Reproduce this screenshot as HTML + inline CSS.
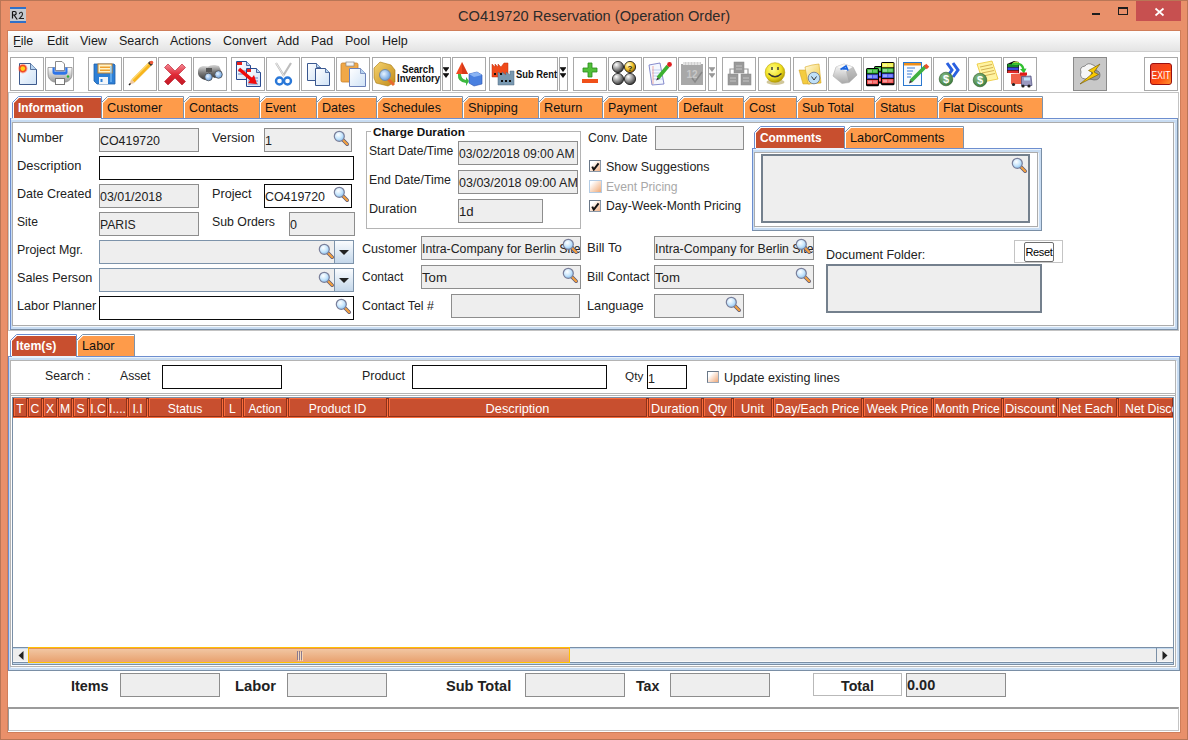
<!DOCTYPE html><html><head><meta charset="utf-8"><style>
html,body{margin:0;padding:0;}
body{width:1188px;height:740px;position:relative;overflow:hidden;background:#e9906a;font-family:"Liberation Sans",sans-serif;}
body div{position:absolute;box-sizing:border-box;}
.t{white-space:pre;}
</style></head><body>
<div style="left:0px;top:0px;width:1188px;height:740px;border:1px solid #b97656;"></div>
<div style="left:10px;top:7px;width:16px;height:16px;background:#c6cacf;border-top:2px solid #2f70c8;border-bottom:2px solid #2f70c8;"></div>
<svg style="position:absolute;left:10px;top:7px" width="16" height="16" viewBox="0 0 16 16"><path d="M2.5 4.5 V11.5 M2.5 4.5 H4.5 Q6.2 4.5 6.2 6.3 Q6.2 8 4.5 8 H2.5 M4 8 L7.2 12.5" stroke="#111" stroke-width="1.2" fill="none"/><path d="M9.3 7 Q9.8 5 11.5 5.3 Q13.2 6 12 8.6 L9.5 11.5 H14" stroke="#222" stroke-width="1.1" fill="none"/></svg>
<div class="t" style="left:458px;top:6px;font-size:15.5px;line-height:20px;color:#2b2b2b;font-weight:400;transform:scaleX(0.943);transform-origin:0 0;">CO419720 Reservation (Operation Order)</div>
<div style="left:1092px;top:13px;width:8px;height:2px;background:#1e1e1e;"></div>
<div style="left:1118px;top:7px;width:10px;height:8px;border:1px solid #1e1e1e;border-top-width:2px;"></div>
<div style="left:1136px;top:1px;width:45px;height:20px;background:#c75050;"></div>
<svg style="position:absolute;left:1154px;top:7px" width="11" height="10" viewBox="0 0 11 10"><path d="M1.5 1.5 L9.5 8.5 M9.5 1.5 L1.5 8.5" stroke="#fff" stroke-width="1.7"/></svg>
<div style="left:7px;top:30px;width:1174px;height:703px;border:1px solid #d07e5a;"></div>
<div style="left:8px;top:31px;width:1172px;height:701px;background:#fff;"></div>
<div style="left:8px;top:31px;width:1172px;height:20px;background:linear-gradient(#ffffff,#e4e4e4);"></div>
<div style="left:8px;top:51px;width:1172px;height:1px;background:#cdcdcd;"></div>
<div class="t" style="left:13px;top:31px;font-size:12.5px;line-height:20px;color:#1a1a1a;font-weight:400;">File</div>
<div class="t" style="left:47px;top:31px;font-size:12.5px;line-height:20px;color:#1a1a1a;font-weight:400;">Edit</div>
<div class="t" style="left:80px;top:31px;font-size:12.5px;line-height:20px;color:#1a1a1a;font-weight:400;">View</div>
<div class="t" style="left:119px;top:31px;font-size:12.5px;line-height:20px;color:#1a1a1a;font-weight:400;">Search</div>
<div class="t" style="left:170px;top:31px;font-size:12.5px;line-height:20px;color:#1a1a1a;font-weight:400;">Actions</div>
<div class="t" style="left:223px;top:31px;font-size:12.5px;line-height:20px;color:#1a1a1a;font-weight:400;">Convert</div>
<div class="t" style="left:277px;top:31px;font-size:12.5px;line-height:20px;color:#1a1a1a;font-weight:400;">Add</div>
<div class="t" style="left:311px;top:31px;font-size:12.5px;line-height:20px;color:#1a1a1a;font-weight:400;">Pad</div>
<div class="t" style="left:345px;top:31px;font-size:12.5px;line-height:20px;color:#1a1a1a;font-weight:400;">Pool</div>
<div class="t" style="left:382px;top:31px;font-size:12.5px;line-height:20px;color:#1a1a1a;font-weight:400;">Help</div>
<div style="left:14px;top:46px;width:7px;height:1px;background:#1a1a1a;"></div>
<div style="left:10px;top:57px;width:34px;height:34px;border:1px solid #a9a9a9;background:#fff;"></div>
<div style="left:45px;top:57px;width:29px;height:34px;border:1px solid #a9a9a9;background:#fff;"></div>
<div style="left:88px;top:57px;width:34px;height:34px;border:1px solid #a9a9a9;background:#fff;"></div>
<div style="left:123px;top:57px;width:34px;height:34px;border:1px solid #a9a9a9;background:#fff;"></div>
<div style="left:158px;top:57px;width:34px;height:34px;border:1px solid #a9a9a9;background:#fff;"></div>
<div style="left:193px;top:57px;width:34px;height:34px;border:1px solid #a9a9a9;background:#fff;"></div>
<div style="left:231px;top:57px;width:34px;height:34px;border:1px solid #a9a9a9;background:#fff;"></div>
<div style="left:266px;top:57px;width:34px;height:34px;border:1px solid #a9a9a9;background:#fff;"></div>
<div style="left:301px;top:57px;width:34px;height:34px;border:1px solid #a9a9a9;background:#fff;"></div>
<div style="left:336px;top:57px;width:34px;height:34px;border:1px solid #a9a9a9;background:#fff;"></div>
<div style="left:372px;top:57px;width:69px;height:34px;border:1px solid #a9a9a9;background:#fff;"></div>
<div style="left:442px;top:57px;width:9px;height:34px;border:1px solid #a9a9a9;background:#fff;"></div>
<div style="left:452px;top:57px;width:34px;height:34px;border:1px solid #a9a9a9;background:#fff;"></div>
<div style="left:489px;top:57px;width:69px;height:34px;border:1px solid #a9a9a9;background:#fff;"></div>
<div style="left:559px;top:57px;width:9px;height:34px;border:1px solid #a9a9a9;background:#fff;"></div>
<div style="left:573px;top:57px;width:34px;height:34px;border:1px solid #a9a9a9;background:#fff;"></div>
<div style="left:608px;top:57px;width:34px;height:34px;border:1px solid #a9a9a9;background:#fff;"></div>
<div style="left:643px;top:57px;width:34px;height:34px;border:1px solid #a9a9a9;background:#fff;"></div>
<div style="left:678px;top:57px;width:28px;height:34px;border:1px solid #a9a9a9;background:#fff;"></div>
<div style="left:708px;top:57px;width:9px;height:34px;border:1px solid #a9a9a9;background:#fff;"></div>
<div style="left:722px;top:57px;width:34px;height:34px;border:1px solid #a9a9a9;background:#fff;"></div>
<div style="left:758px;top:57px;width:33px;height:34px;border:1px solid #a9a9a9;background:#fff;"></div>
<div style="left:793px;top:57px;width:34px;height:34px;border:1px solid #a9a9a9;background:#fff;"></div>
<div style="left:828px;top:57px;width:34px;height:34px;border:1px solid #a9a9a9;background:#fff;"></div>
<div style="left:863px;top:57px;width:34px;height:34px;border:1px solid #a9a9a9;background:#fff;"></div>
<div style="left:898px;top:57px;width:34px;height:34px;border:1px solid #a9a9a9;background:#fff;"></div>
<div style="left:933px;top:57px;width:34px;height:34px;border:1px solid #a9a9a9;background:#fff;"></div>
<div style="left:968px;top:57px;width:34px;height:34px;border:1px solid #a9a9a9;background:#fff;"></div>
<div style="left:1003px;top:57px;width:34px;height:34px;border:1px solid #a9a9a9;background:#fff;"></div>
<div style="left:1073px;top:57px;width:34px;height:34px;border:1px solid #8a8a8a;background:#c8c8c8;"></div>
<div style="left:1144px;top:57px;width:34px;height:34px;border:1px solid #a9a9a9;background:#fff;"></div>
<svg style="position:absolute;left:0;top:0" width="1188" height="100" viewBox="0 0 1188 100"><defs>
<linearGradient id="pg" x1="0" y1="0" x2="1" y2="1"><stop offset="0" stop-color="#ffffff"/><stop offset="1" stop-color="#cfe2f6"/></linearGradient>
<radialGradient id="sun" cx="0.5" cy="0.5" r="0.5"><stop offset="0" stop-color="#fff37a"/><stop offset="0.45" stop-color="#ffb020"/><stop offset="1" stop-color="#ff3020" stop-opacity="0.2"/></radialGradient>
<linearGradient id="xr" x1="0" y1="0" x2="0" y2="1"><stop offset="0" stop-color="#f48a96"/><stop offset="0.5" stop-color="#e02a36"/><stop offset="1" stop-color="#c01824"/></linearGradient>
<radialGradient id="ball" cx="0.35" cy="0.3" r="0.75"><stop offset="0" stop-color="#ffffff"/><stop offset="0.5" stop-color="#9a9a9a"/><stop offset="1" stop-color="#303030"/></radialGradient>
<radialGradient id="yball" cx="0.35" cy="0.3" r="0.75"><stop offset="0" stop-color="#ffffe0"/><stop offset="0.5" stop-color="#f5c830"/><stop offset="1" stop-color="#906000"/></radialGradient>
<radialGradient id="smile" cx="0.4" cy="0.35" r="0.7"><stop offset="0" stop-color="#ffff90"/><stop offset="0.6" stop-color="#f0e020"/><stop offset="1" stop-color="#a89000"/></radialGradient>
<radialGradient id="lens" cx="0.4" cy="0.4" r="0.6"><stop offset="0" stop-color="#e8f4ff"/><stop offset="1" stop-color="#6aa0e0"/></radialGradient>
<radialGradient id="coin" cx="0.4" cy="0.35" r="0.7"><stop offset="0" stop-color="#8cc08c"/><stop offset="1" stop-color="#3a7a3a"/></radialGradient>
<linearGradient id="exitg" x1="0" y1="0" x2="1" y2="1"><stop offset="0" stop-color="#e8402a"/><stop offset="0.6" stop-color="#ff4a10"/><stop offset="1" stop-color="#ff9a30"/></linearGradient>
<linearGradient id="keyg" x1="0" y1="0" x2="0" y2="1"><stop offset="0" stop-color="#ffffff"/><stop offset="1" stop-color="#a8a8a8"/></linearGradient>
<linearGradient id="fold" x1="0" y1="0" x2="1" y2="1"><stop offset="0" stop-color="#fffbe0"/><stop offset="1" stop-color="#f2c430"/></linearGradient>
<linearGradient id="boxg" x1="0" y1="0" x2="1" y2="1"><stop offset="0" stop-color="#f6d470"/><stop offset="1" stop-color="#c08a18"/></linearGradient>
<linearGradient id="prn" x1="0" y1="0" x2="0" y2="1"><stop offset="0" stop-color="#ffffff"/><stop offset="1" stop-color="#9a9a9a"/></linearGradient>
</defs><path d="M19.5 63.5 L30.5 63.5 L36.5 69.5 L36.5 84.5 L19.5 84.5 Z" fill="url(#pg)" stroke="#3d5a8c"/><path d="M30.5 63.5 L30.5 69.5 L36.5 69.5" fill="#b8d4f0" stroke="#3d5a8c" stroke-width="0.8"/><circle cx="22.8" cy="68.6" r="4.8" fill="#ff4020" opacity="0.35"/><circle cx="22.8" cy="68.6" r="3.8" fill="#f24a22"/><circle cx="22.8" cy="68.6" r="2.3" fill="#ffd21a"/><path d="M48 67.5 L72 67.5 L72 74 Q72 80 66 82 L54 82 Q48 80 48 74 Z" fill="url(#prn)" stroke="#8a8a8a" stroke-width="0.8"/><path d="M52.5 67.5 H67.5 V72 Q67.5 74.8 64.5 74.8 H55.5 Q52.5 74.8 52.5 72 Z" fill="#2f74e8"/><rect x="54.5" y="67.5" width="11" height="4.5" fill="#8ab8f8"/><path d="M55.5 61.5 L62 61.5 L64.5 64 L64.5 70.5 L55.5 70.5 Z" fill="#fff" stroke="#8a8a8a"/><rect x="55.5" y="70" width="9" height="1.5" fill="#8a8a9a"/><circle cx="68" cy="76.5" r="1.2" fill="#2cb030"/><rect x="55.5" y="78.5" width="9" height="6" fill="#fff" stroke="#777"/><path d="M94 64 L114 64 L115 65 L115 84 L97 84 L94 81 Z" fill="#2d7fd6" stroke="#1f5fa8" stroke-width="0.8"/><rect x="98" y="64" width="14" height="9" fill="#fff4c8" stroke="#c8842c"/><rect x="100" y="66.5" width="10" height="1.5" fill="#f0a030"/><rect x="100" y="69.5" width="10" height="1.5" fill="#f0a030"/><rect x="99" y="77" width="9" height="7" fill="#f2f6fa"/><rect x="100.5" y="79" width="2" height="3" fill="#2d7fd6"/><rect x="110" y="66" width="2" height="16" fill="#7cc0f8" opacity="0.6"/><path d="M131 83 L150 64" stroke="#e0e0e0" stroke-width="5" opacity="0.35"/><path d="M133 81 L150 64" stroke="#f7b51e" stroke-width="4"/><path d="M132 80 L149 63" stroke="#ffd86a" stroke-width="1.2"/><path d="M149 62 L152 65" stroke="#333" stroke-width="3"/><circle cx="151.5" cy="62.5" r="1.8" fill="#f05a3a"/><path d="M131.2 79.5 L134.5 82.8 L129 85 Z" fill="#f0c8a0"/><path d="M129 85 L130.5 83.5" stroke="#222" stroke-width="1.5"/><path d="M168 64 L175 71 L182 64 L185.5 67.5 L178.5 74.5 L185.5 81.5 L182 85 L175 78 L168 85 L164.5 81.5 L171.5 74.5 L164.5 67.5 Z" fill="url(#xr)" stroke="#c02a3a" stroke-width="0.7"/><defs><linearGradient id="bino" x1="0" y1="0" x2="0" y2="1"><stop offset="0" stop-color="#d8d8d8"/><stop offset="0.5" stop-color="#7a7a7a"/><stop offset="1" stop-color="#3a3a3a"/></linearGradient></defs><path d="M198 71 Q198 67 203 66 L209 66.5 L212 75 L205 80 Q199 78 198 74 Z" fill="url(#bino)"/><path d="M208 67 Q210 64.5 215 65 L219 66 L222 73 L215 78 Q210 76 208 72 Z" fill="url(#bino)"/><rect x="206" y="68" width="6" height="4" fill="#555"/><circle cx="208.5" cy="77" r="3.8" fill="url(#lens)" stroke="#4a4a4a" stroke-width="0.8"/><circle cx="218.5" cy="74.5" r="3.8" fill="url(#lens)" stroke="#4a4a4a" stroke-width="0.8"/><path d="M236.5 61.5 L246.5 61.5 L250.5 65.5 L250.5 79.5 L236.5 79.5 Z" fill="url(#pg)" stroke="#2a4a90"/><path d="M246.5 61.5 L246.5 65.5 L250.5 65.5" fill="#b8d4f0" stroke="#2a4a90" stroke-width="0.8"/><rect x="237" y="62" width="5" height="3" fill="#e8201a"/><path d="M238 71 H247 M238 74 H247" stroke="#6680c0"/><path d="M246.5 68.5 L256.5 68.5 L260.5 72.5 L260.5 86.5 L246.5 86.5 Z" fill="url(#pg)" stroke="#2a4a90"/><path d="M256.5 68.5 L256.5 72.5 L260.5 72.5" fill="#b8d4f0" stroke="#2a4a90" stroke-width="0.8"/><rect x="247" y="69" width="4" height="3" fill="#e8201a"/><path d="M248 78 H258 M248 81 H258 M248 84 H258" stroke="#6680c0"/><path d="M239 69 L252 80" stroke="#f00a0a" stroke-width="3.5"/><path d="M248 83 L257 84 L254 75 Z" fill="#f00a0a"/><path d="M276 63 L284 76 M291 63 L283 76" stroke="#bdbdbd" stroke-width="2.2"/><path d="M276 63 L284 76" stroke="#f4f4f4" stroke-width="0.8"/><circle cx="279.5" cy="81" r="3.5" fill="none" stroke="#2a78d8" stroke-width="2.4"/><circle cx="287.5" cy="81" r="3.5" fill="none" stroke="#2a78d8" stroke-width="2.4"/><path d="M307.5 63.5 L316.5 63.5 L320.5 67.5 L320.5 80.5 L307.5 80.5 Z" fill="url(#pg)" stroke="#3a5890"/><path d="M316.5 63.5 L316.5 67.5 L320.5 67.5" fill="#b8d4f0" stroke="#3a5890" stroke-width="0.8"/><path d="M315.5 68.5 L325.5 68.5 L329.5 72.5 L329.5 85.5 L315.5 85.5 Z" fill="url(#pg)" stroke="#3a5890"/><path d="M325.5 68.5 L325.5 72.5 L329.5 72.5" fill="#b8d4f0" stroke="#3a5890" stroke-width="0.8"/><rect x="341" y="63" width="17" height="19" rx="1.5" fill="#f0a848" stroke="#c8802a" stroke-width="0.8"/><rect x="346" y="62" width="8" height="4" fill="#f4f4f4" stroke="#888" stroke-width="0.7"/><path d="M349.5 68.5 L360.5 68.5 L365.5 73.5 L365.5 86.5 L349.5 86.5 Z" fill="url(#pg)" stroke="#6a80b8"/><path d="M360.5 68.5 L360.5 73.5 L365.5 73.5" fill="#b8d4f0" stroke="#6a80b8" stroke-width="0.8"/><path d="M374 68 L380 62 L391 65 L395 70 L395 82 L388 86 L376 83 L374 78 Z" fill="url(#boxg)" stroke="#a87810" stroke-width="0.6"/><path d="M388 79 L394 85" stroke="#e86a30" stroke-width="3"/><circle cx="385" cy="75" r="5.5" fill="url(#lens)" stroke="#7a8a9a" stroke-width="1"/><text x="418" y="73" text-anchor="middle" font-family="Liberation Sans" font-weight="700" font-size="10" fill="#111" textLength="32" lengthAdjust="spacingAndGlyphs">Search</text><text x="418.5" y="82" text-anchor="middle" font-family="Liberation Sans" font-weight="700" font-size="10" fill="#111" textLength="43" lengthAdjust="spacingAndGlyphs">Inventory</text><path d="M443 68 H449 L446 72 Z M443 74 H449 L446 78 Z" fill="#111"/><path d="M443 67.5 H449 M443 73.5 H449" stroke="#111" stroke-width="0.8"/><path d="M462 62 L468 74 L456 74 Z" fill="#f04a20"/><path d="M462 62 L468 74 L462 74 Z" fill="#c02a10" opacity="0.5"/><path d="M469 74 L477 72 L482 75 L482 84 L474 86 L469 83 Z" fill="#4a80e0" stroke="#2a50b0" stroke-width="0.6"/><path d="M469 74 L477 72 L482 75 L474 77 Z" fill="#8ab4f4"/><path d="M458 74 Q457 82 466 83 L466 86 L469 81 L466 77 L466 80 Q461 79 461 74 Z" fill="#3cb840"/><path d="M492 64 L495 67 L495 64 L498 67 L498 64 L501 67 L504 63 L508 63 L508 77 L492 77 Z" fill="#f04a1a" stroke="#c03010" stroke-width="0.5"/><path d="M498 72 L502 75 L502 72 L506 75 L506 72 L510 75 L510 71 L514 71 L514 85 L498 85 Z" fill="#7898b0" stroke="#506a80" stroke-width="0.5"/><rect x="494" y="73" width="2" height="2" fill="#111"/><rect x="500" y="73" width="2" height="2" fill="#111"/><rect x="501" y="80" width="2" height="2" fill="#111"/><rect x="505" y="80" width="2" height="2" fill="#111"/><rect x="509" y="80" width="2" height="2" fill="#111"/><text x="536.5" y="77.5" text-anchor="middle" font-family="Liberation Sans" font-weight="700" font-size="10" fill="#111" textLength="41" lengthAdjust="spacingAndGlyphs">Sub Rent</text><path d="M560 68 H566 L563 72 Z M560 74 H566 L563 78 Z" fill="#111"/><path d="M560 67.5 H566 M560 73.5 H566" stroke="#111" stroke-width="0.8"/><path d="M588 63 H592 V68 H597 V72 H592 V77 H588 V72 H583 V68 H588 Z" fill="#52c03a" stroke="#2a8a1a" stroke-width="0.8"/><rect x="582" y="79" width="16" height="4" fill="#f0501a"/><circle cx="618" cy="67" r="5.6" fill="url(#ball)" stroke="#111" stroke-width="0.8"/><circle cx="630" cy="67" r="5.6" fill="url(#yball)" stroke="#111" stroke-width="0.8"/><circle cx="618" cy="79" r="5.6" fill="url(#ball)" stroke="#111" stroke-width="0.8"/><circle cx="630" cy="79" r="5.6" fill="url(#ball)" stroke="#111" stroke-width="0.8"/><text x="630" y="71" text-anchor="middle" font-family="Liberation Sans" font-weight="700" font-size="8" fill="#222">?</text><path d="M649 65 L660 63 L664 84 L652 85 Z" fill="#f4f8ff" stroke="#6a70c0" stroke-width="0.8"/><path d="M652 70 H661 M652 73 H662 M653 76 H662 M653 79 H663" stroke="#9ab0e0" stroke-width="0.6"/><path d="M653 66 V84" stroke="#f07a6a" stroke-width="0.6"/><path d="M658 78 L668 66" stroke="#3cb030" stroke-width="3.6"/><circle cx="669.5" cy="64.5" r="2.4" fill="#e02020"/><path d="M656 80.5 L657.5 77.5 L659.5 79 Z" fill="#333"/><rect x="681" y="64" width="22" height="21" fill="#a8a8a8"/><rect x="683" y="62" width="18" height="3" fill="#d0d0d0"/><path d="M684 62 V65 M687 62 V65 M690 62 V65 M693 62 V65 M696 62 V65 M699 62 V65" stroke="#f0f0f0" stroke-width="1.2"/><text x="692" y="78" text-anchor="middle" font-family="Liberation Sans" font-weight="700" font-size="10" fill="#c8c8c8">12</text><path d="M692 78 L695 82 L702 72" stroke="#888" stroke-width="1.5" fill="none"/><path d="M709 68 H715 L712 72 Z M709 74 H715 L712 78 Z" fill="#999"/><path d="M709 67.5 H715 M709 73.5 H715" stroke="#999" stroke-width="0.8"/><path d="M730 75 V69 H748 V75 M739 69 V73" stroke="#999" stroke-width="1.2" fill="none"/><rect x="734" y="62" width="10" height="11" fill="#999" stroke="#888" stroke-width="0.5"/><path d="M736 66 H742 M736 69 H742" stroke="#cfcfcf" stroke-width="0.8"/><rect x="728" y="74" width="10" height="11" fill="#999" stroke="#888" stroke-width="0.5"/><path d="M730 78 H736 M730 81 H736" stroke="#cfcfcf" stroke-width="0.8"/><rect x="741" y="74" width="10" height="11" fill="#999" stroke="#888" stroke-width="0.5"/><path d="M743 78 H749 M743 81 H749" stroke="#cfcfcf" stroke-width="0.8"/><ellipse cx="775.5" cy="82" rx="9" ry="3" fill="#8a7000" opacity="0.4"/><circle cx="775" cy="72.5" r="9.8" fill="url(#smile)" stroke="#b8a000" stroke-width="0.6"/><path d="M772 67 V70 M778 67 V70" stroke="#333" stroke-width="1.4"/><path d="M768.5 73.5 Q775 80 781.5 73.5" stroke="#333" stroke-width="1.4" fill="none"/><path d="M799 70 L806 70 L810 84 L803 84 Z" fill="#f4cc40" stroke="#c89820" stroke-width="0.5"/><path d="M805 67 L812 65 L819 64 L821 83 L808 84 Z" fill="url(#fold)" stroke="#d8a820" stroke-width="0.6"/><circle cx="814" cy="78" r="5.8" fill="#bfe0f8" stroke="#708098" stroke-width="0.9"/><path d="M811.5 76.5 L814 80 L816.5 76.5" stroke="#333" stroke-width="1" fill="none"/><path d="M836 67 L844 64 L853 67 L857 75 L849 82.5 L842 83.5 L833 76 Z" fill="url(#keyg)" stroke="#b0b0b0" stroke-width="0.6"/><path d="M836 67 L844 64 L853 67 L846 71.5 Z" fill="#f8f8f8" stroke="#d8d8d8" stroke-width="0.5"/><path d="M846 71.5 L853 67 L857 75 L849 82.5 Z" fill="#9a9a9a" opacity="0.5"/><path d="M840.5 69.5 L846 66 L848 70.5 M842.5 68.8 L847.2 68.8" stroke="#1a64e0" stroke-width="1.8" fill="none"/><rect x="874" y="66" width="14" height="17.6" rx="1.5" fill="#000"/><rect x="875" y="67.0" width="12" height="4.2" fill="#28b028"/><rect x="876" y="67.8" width="4.5" height="2.6" fill="#fff" opacity="0.45"/><rect x="881.5" y="67.8" width="4.5" height="2.6" fill="#fff" opacity="0.3"/><rect x="875" y="72.2" width="12" height="4.2" fill="#3a4af0"/><rect x="876" y="73.0" width="4.5" height="2.6" fill="#fff" opacity="0.45"/><rect x="881.5" y="73.0" width="4.5" height="2.6" fill="#fff" opacity="0.3"/><rect x="875" y="77.4" width="12" height="4.2" fill="#f03a3a"/><rect x="876" y="78.2" width="4.5" height="2.6" fill="#fff" opacity="0.45"/><rect x="881.5" y="78.2" width="4.5" height="2.6" fill="#fff" opacity="0.3"/><rect x="866" y="68" width="13" height="18.200000000000003" rx="1.5" fill="#000"/><rect x="867" y="69.0" width="11" height="4.4" fill="#28b028"/><rect x="868" y="69.8" width="4.0" height="2.8000000000000003" fill="#fff" opacity="0.45"/><rect x="873.0" y="69.8" width="4.0" height="2.8000000000000003" fill="#fff" opacity="0.3"/><rect x="867" y="74.4" width="11" height="4.4" fill="#4a5af8"/><rect x="868" y="75.2" width="4.0" height="2.8000000000000003" fill="#fff" opacity="0.45"/><rect x="873.0" y="75.2" width="4.0" height="2.8000000000000003" fill="#fff" opacity="0.3"/><rect x="867" y="79.8" width="11" height="4.4" fill="#f04a4a"/><rect x="868" y="80.6" width="4.0" height="2.8000000000000003" fill="#fff" opacity="0.45"/><rect x="873.0" y="80.6" width="4.0" height="2.8000000000000003" fill="#fff" opacity="0.3"/><rect x="881" y="62" width="13.5" height="23.2" rx="1.5" fill="#000"/><rect x="882" y="63.0" width="11.5" height="4.3" fill="#f0f040"/><rect x="883" y="63.8" width="4.25" height="2.6999999999999997" fill="#fff" opacity="0.45"/><rect x="888.25" y="63.8" width="4.25" height="2.6999999999999997" fill="#fff" opacity="0.3"/><rect x="882" y="68.3" width="11.5" height="4.3" fill="#40c040"/><rect x="883" y="69.1" width="4.25" height="2.6999999999999997" fill="#fff" opacity="0.45"/><rect x="888.25" y="69.1" width="4.25" height="2.6999999999999997" fill="#fff" opacity="0.3"/><rect x="882" y="73.6" width="11.5" height="4.3" fill="#4a5af8"/><rect x="883" y="74.39999999999999" width="4.25" height="2.6999999999999997" fill="#fff" opacity="0.45"/><rect x="888.25" y="74.39999999999999" width="4.25" height="2.6999999999999997" fill="#fff" opacity="0.3"/><rect x="882" y="78.9" width="11.5" height="4.3" fill="#f04a4a"/><rect x="883" y="79.7" width="4.25" height="2.6999999999999997" fill="#fff" opacity="0.45"/><rect x="888.25" y="79.7" width="4.25" height="2.6999999999999997" fill="#fff" opacity="0.3"/><rect x="903.5" y="62.5" width="18" height="23" fill="#f8fbff" stroke="#2a78d0"/><rect x="904" y="63" width="17" height="2.5" fill="#f0901a"/><path d="M907 68 H915 M907 71 H913 M907 74 H912 M907 77 H911" stroke="#2a70d0" stroke-width="0.9"/><path d="M911 81 L926 66" stroke="#40b040" stroke-width="3.8"/><path d="M925 65 L928 68" stroke="#e8502a" stroke-width="3.5"/><path d="M909 83.5 L910 80 L912.5 82 Z" fill="#333"/><path d="M947 63 L952 70 L947 77 M953 63 L958 70 L953 77" stroke="#2a60e0" stroke-width="3" fill="none"/><circle cx="946" cy="79" r="6.8" fill="url(#coin)" stroke="#2a5a2a" stroke-width="0.6"/><text x="946" y="83" text-anchor="middle" font-family="Liberation Sans" font-weight="700" font-size="11" fill="#fff">$</text><path d="M977 64 L992 61 L998 79 L983 82 Z" fill="#fff3a0" stroke="#e8c020" stroke-width="0.7"/><path d="M980 67 L992 64.5 M981 70 L993 67.5 M982 73 L994 70.5 M983 76 L995 73.5" stroke="#c8a040" stroke-width="0.8"/><circle cx="980" cy="80" r="6.8" fill="url(#coin)" stroke="#2a5a2a" stroke-width="0.6"/><text x="980" y="84" text-anchor="middle" font-family="Liberation Sans" font-weight="700" font-size="11" fill="#fff">$</text><path d="M1007 64 L1014 61 L1019 62 L1019 73 L1007 73 Z" fill="#111"/><rect x="1007.5" y="64" width="11" height="3" fill="#1a8a2a"/><rect x="1007.5" y="67.5" width="11" height="2.5" fill="#3a4ae0"/><rect x="1007.5" y="70.5" width="11" height="2.5" fill="#e02a2a"/><ellipse cx="1016" cy="63" rx="3" ry="1.6" fill="#e8e050"/><path d="M1012 65 Q1021 63 1022 69 L1020 69 L1024 73.5 L1026.5 68.5 L1024.5 68.8 Q1023 61 1012 63 Z" fill="#30c030"/><path d="M1011 74 L1026 73 L1026 84 L1011 84 Z" fill="#f06048"/><rect x="1020" y="72.5" width="7" height="3" fill="#e01a1a"/><path d="M1021.5 76.5 L1031 76 L1032 85.5 L1021.5 85.5 Z" fill="#9a9ac0" stroke="#4a4a7a" stroke-width="0.7"/><rect x="1024" y="77.5" width="6" height="3" fill="#bfe0f8"/><circle cx="1013.5" cy="84.5" r="1.6" fill="#222"/><circle cx="1023" cy="86" r="1.6" fill="#222"/><circle cx="1029" cy="86" r="1.6" fill="#222"/><path d="M1081 72 Q1079 67 1085 66 Q1088 62 1093 65 Q1097 66 1096 71 Q1097 78 1090 79 L1085 79 Q1079 78 1081 72 Z" fill="#f6f6f6" stroke="#666" stroke-width="0.7"/><path d="M1092 71 Q1100 69 1100 75 Q1100 80 1094 80 L1090 79 Z" fill="#9a9a9a" stroke="#555" stroke-width="0.6"/><path d="M1100 64 L1088.5 70.5 L1093 73 L1080 84 L1098.5 74.5 L1094 72 Z" fill="#f8c800" stroke="#6a5000" stroke-width="0.6"/><rect x="1150.5" y="63.5" width="21" height="21" rx="2.5" fill="url(#exitg)" stroke="#9a1010"/><text x="1161" y="79" text-anchor="middle" font-family="Liberation Sans" font-size="10" fill="#fff" textLength="19" lengthAdjust="spacingAndGlyphs">EXIT</text></svg>
<div style="left:8px;top:92px;width:1171px;height:239px;border:1px solid #c3c3c3;"></div>
<div style="left:10px;top:118px;width:1168px;height:212px;background:#c8dcf2;border-left:1px solid #6d8ecf;border-top:1px solid #6d8ecf;border-right:1px solid #7a8fa6;border-bottom:1px solid #7a8fa6;"></div>
<div style="left:11px;top:119px;width:1166px;height:1px;background:#eaf2fb;"></div>
<div style="left:12px;top:122px;width:1162px;height:204px;background:#fff;border:1px solid #acacac;box-shadow:1px 1px 0 #f4f8fc;"></div>
<svg style="position:absolute;left:12px;top:96px" width="90" height="22" viewBox="0 0 90 22"><path d="M0.5 22 L0.5 6.5 L6.5 0.5 L89.5 0.5 L89.5 22" fill="#fff" stroke="#6d8ecf" stroke-width="1"/><path d="M2 22 L2 7 L7 2 L89 2 L89 22 Z" fill="#c84f2f"/></svg>
<div class="t" style="left:18px;top:98px;font-size:11.93px;line-height:20px;color:#fff;font-weight:700;">Information</div>
<svg style="position:absolute;left:101px;top:96px" width="83" height="22" viewBox="0 0 83 22"><path d="M0.5 22 L0.5 6.5 L6.5 0.5 L82.5 0.5 L82.5 22" fill="#fff" stroke="#7d92aa" stroke-width="1"/><path d="M2 22 L2 7 L7 2 L82 2 L82 22 Z" fill="#fe9b4a"/></svg>
<div class="t" style="left:107px;top:98px;font-size:12.78px;line-height:20px;color:#111;font-weight:400;">Customer</div>
<svg style="position:absolute;left:183px;top:96px" width="77" height="22" viewBox="0 0 77 22"><path d="M0.5 22 L0.5 6.5 L6.5 0.5 L76.5 0.5 L76.5 22" fill="#fff" stroke="#7d92aa" stroke-width="1"/><path d="M2 22 L2 7 L7 2 L76 2 L76 22 Z" fill="#fe9b4a"/></svg>
<div class="t" style="left:189px;top:98px;font-size:12.47px;line-height:20px;color:#111;font-weight:400;">Contacts</div>
<svg style="position:absolute;left:259px;top:96px" width="58" height="22" viewBox="0 0 58 22"><path d="M0.5 22 L0.5 6.5 L6.5 0.5 L57.5 0.5 L57.5 22" fill="#fff" stroke="#7d92aa" stroke-width="1"/><path d="M2 22 L2 7 L7 2 L57 2 L57 22 Z" fill="#fe9b4a"/></svg>
<div class="t" style="left:265px;top:98px;font-size:12.04px;line-height:20px;color:#111;font-weight:400;">Event</div>
<svg style="position:absolute;left:316px;top:96px" width="61" height="22" viewBox="0 0 61 22"><path d="M0.5 22 L0.5 6.5 L6.5 0.5 L60.5 0.5 L60.5 22" fill="#fff" stroke="#7d92aa" stroke-width="1"/><path d="M2 22 L2 7 L7 2 L60 2 L60 22 Z" fill="#fe9b4a"/></svg>
<div class="t" style="left:322px;top:98px;font-size:12.6px;line-height:20px;color:#111;font-weight:400;">Dates</div>
<svg style="position:absolute;left:376px;top:96px" width="87" height="22" viewBox="0 0 87 22"><path d="M0.5 22 L0.5 6.5 L6.5 0.5 L86.5 0.5 L86.5 22" fill="#fff" stroke="#7d92aa" stroke-width="1"/><path d="M2 22 L2 7 L7 2 L86 2 L86 22 Z" fill="#fe9b4a"/></svg>
<div class="t" style="left:382px;top:98px;font-size:12.63px;line-height:20px;color:#111;font-weight:400;">Schedules</div>
<svg style="position:absolute;left:462px;top:96px" width="77" height="22" viewBox="0 0 77 22"><path d="M0.5 22 L0.5 6.5 L6.5 0.5 L76.5 0.5 L76.5 22" fill="#fff" stroke="#7d92aa" stroke-width="1"/><path d="M2 22 L2 7 L7 2 L76 2 L76 22 Z" fill="#fe9b4a"/></svg>
<div class="t" style="left:468px;top:98px;font-size:12.82px;line-height:20px;color:#111;font-weight:400;">Shipping</div>
<svg style="position:absolute;left:538px;top:96px" width="65" height="22" viewBox="0 0 65 22"><path d="M0.5 22 L0.5 6.5 L6.5 0.5 L64.5 0.5 L64.5 22" fill="#fff" stroke="#7d92aa" stroke-width="1"/><path d="M2 22 L2 7 L7 2 L64 2 L64 22 Z" fill="#fe9b4a"/></svg>
<div class="t" style="left:544px;top:98px;font-size:12.77px;line-height:20px;color:#111;font-weight:400;">Return</div>
<svg style="position:absolute;left:602px;top:96px" width="76" height="22" viewBox="0 0 76 22"><path d="M0.5 22 L0.5 6.5 L6.5 0.5 L75.5 0.5 L75.5 22" fill="#fff" stroke="#7d92aa" stroke-width="1"/><path d="M2 22 L2 7 L7 2 L75 2 L75 22 Z" fill="#fe9b4a"/></svg>
<div class="t" style="left:608px;top:98px;font-size:12.39px;line-height:20px;color:#111;font-weight:400;">Payment</div>
<svg style="position:absolute;left:677px;top:96px" width="67" height="22" viewBox="0 0 67 22"><path d="M0.5 22 L0.5 6.5 L6.5 0.5 L66.5 0.5 L66.5 22" fill="#fff" stroke="#7d92aa" stroke-width="1"/><path d="M2 22 L2 7 L7 2 L66 2 L66 22 Z" fill="#fe9b4a"/></svg>
<div class="t" style="left:683px;top:98px;font-size:12.66px;line-height:20px;color:#111;font-weight:400;">Default</div>
<svg style="position:absolute;left:743px;top:96px" width="54" height="22" viewBox="0 0 54 22"><path d="M0.5 22 L0.5 6.5 L6.5 0.5 L53.5 0.5 L53.5 22" fill="#fff" stroke="#7d92aa" stroke-width="1"/><path d="M2 22 L2 7 L7 2 L53 2 L53 22 Z" fill="#fe9b4a"/></svg>
<div class="t" style="left:749px;top:98px;font-size:12.8px;line-height:20px;color:#111;font-weight:400;">Cost</div>
<svg style="position:absolute;left:796px;top:96px" width="79" height="22" viewBox="0 0 79 22"><path d="M0.5 22 L0.5 6.5 L6.5 0.5 L78.5 0.5 L78.5 22" fill="#fff" stroke="#7d92aa" stroke-width="1"/><path d="M2 22 L2 7 L7 2 L78 2 L78 22 Z" fill="#fe9b4a"/></svg>
<div class="t" style="left:802px;top:98px;font-size:12.49px;line-height:20px;color:#111;font-weight:400;">Sub Total</div>
<svg style="position:absolute;left:874px;top:96px" width="64" height="22" viewBox="0 0 64 22"><path d="M0.5 22 L0.5 6.5 L6.5 0.5 L63.5 0.5 L63.5 22" fill="#fff" stroke="#7d92aa" stroke-width="1"/><path d="M2 22 L2 7 L7 2 L63 2 L63 22 Z" fill="#fe9b4a"/></svg>
<div class="t" style="left:880px;top:98px;font-size:12.44px;line-height:20px;color:#111;font-weight:400;">Status</div>
<svg style="position:absolute;left:937px;top:96px" width="106" height="22" viewBox="0 0 106 22"><path d="M0.5 22 L0.5 6.5 L6.5 0.5 L105.5 0.5 L105.5 22" fill="#fff" stroke="#7d92aa" stroke-width="1"/><path d="M2 22 L2 7 L7 2 L105 2 L105 22 Z" fill="#fe9b4a"/></svg>
<div class="t" style="left:943px;top:98px;font-size:12.6px;line-height:20px;color:#111;font-weight:400;">Flat Discounts</div>
<div style="left:13px;top:118px;width:88px;height:1px;background:#eaf2fb;"></div>
<div style="left:11px;top:118px;width:2px;height:1px;background:#c8dcf2;"></div>
<div class="t" style="left:17px;top:128px;font-size:12.99px;line-height:20px;color:#222;font-weight:400;">Number</div>
<div style="left:99px;top:128px;width:100px;height:24px;overflow:hidden;border:1px solid #8d8d8d;background:#eeeeee;"><div class="t" style="left:0px;top:2px;font-size:12.42px;line-height:20px;color:#222;font-weight:400">CO419720</div></div>
<div class="t" style="left:17px;top:156px;font-size:12.89px;line-height:20px;color:#222;font-weight:400;">Description</div>
<div style="left:99px;top:156px;width:255px;height:24px;overflow:hidden;border:1px solid #0a0a0a;background:#fff;"></div>
<div class="t" style="left:17px;top:184px;font-size:12.53px;line-height:20px;color:#222;font-weight:400;">Date Created</div>
<div style="left:99px;top:184px;width:100px;height:24px;overflow:hidden;border:1px solid #8d8d8d;background:#eeeeee;"><div class="t" style="left:0px;top:2px;font-size:12.41px;line-height:20px;color:#222;font-weight:400">03/01/2018</div></div>
<div class="t" style="left:17px;top:212px;font-size:12.12px;line-height:20px;color:#222;font-weight:400;">Site</div>
<div style="left:99px;top:212px;width:100px;height:24px;overflow:hidden;border:1px solid #8d8d8d;background:#eeeeee;"><div class="t" style="left:0px;top:2px;font-size:12.21px;line-height:20px;color:#222;font-weight:400">PARIS</div></div>
<div class="t" style="left:212px;top:128px;font-size:12.77px;line-height:20px;color:#222;font-weight:400;">Version</div>
<div style="left:264px;top:128px;width:88px;height:24px;overflow:hidden;border:1px solid #8d8d8d;background:#eeeeee;"><div class="t" style="left:0px;top:2px;font-size:12.5px;line-height:20px;color:#222;font-weight:400">1</div></div>
<svg style="position:absolute;left:333px;top:130px" width="17" height="17" viewBox="0 0 17 17"><defs><radialGradient id="g333_130" cx="0.4" cy="0.35" r="0.7"><stop offset="0" stop-color="#ffffff"/><stop offset="0.55" stop-color="#c8e6fc"/><stop offset="1" stop-color="#86bff0"/></radialGradient></defs><path d="M9.8 9.8 L14.2 14.2" stroke="#5a5a7a" stroke-width="3.6" stroke-linecap="round"/><path d="M9.8 9.8 L14.2 14.2" stroke="#f2a040" stroke-width="2.2" stroke-linecap="round"/><circle cx="6.3" cy="6.3" r="5" fill="url(#g333_130)" stroke="#7a7f9a" stroke-width="1.2"/></svg>
<div class="t" style="left:212px;top:184px;font-size:12.7px;line-height:20px;color:#222;font-weight:400;">Project</div>
<div style="left:264px;top:184px;width:88px;height:24px;overflow:hidden;border:1px solid #0a0a0a;background:#fff;"><div class="t" style="left:0px;top:2px;font-size:12.42px;line-height:20px;color:#222;font-weight:400">CO419720</div></div>
<svg style="position:absolute;left:333px;top:186px" width="17" height="17" viewBox="0 0 17 17"><defs><radialGradient id="g333_186" cx="0.4" cy="0.35" r="0.7"><stop offset="0" stop-color="#ffffff"/><stop offset="0.55" stop-color="#c8e6fc"/><stop offset="1" stop-color="#86bff0"/></radialGradient></defs><path d="M9.8 9.8 L14.2 14.2" stroke="#5a5a7a" stroke-width="3.6" stroke-linecap="round"/><path d="M9.8 9.8 L14.2 14.2" stroke="#f2a040" stroke-width="2.2" stroke-linecap="round"/><circle cx="6.3" cy="6.3" r="5" fill="url(#g333_186)" stroke="#7a7f9a" stroke-width="1.2"/></svg>
<div class="t" style="left:212px;top:212px;font-size:12.32px;line-height:20px;color:#222;font-weight:400;">Sub Orders</div>
<div style="left:289px;top:212px;width:66px;height:24px;overflow:hidden;border:1px solid #8d8d8d;background:#eeeeee;"><div class="t" style="left:0px;top:2px;font-size:12.5px;line-height:20px;color:#222;font-weight:400">0</div></div>
<div class="t" style="left:17px;top:240px;font-size:12.39px;line-height:20px;color:#222;font-weight:400;">Project Mgr.</div>
<div style="left:99px;top:240px;width:255px;height:24px;overflow:hidden;border:1px solid #7d93aa;background:#eeeeee;"></div>
<div style="left:334px;top:241px;width:19px;height:22px;background:linear-gradient(#fafcfe,#c4d7ea);border-left:1px solid #7d93aa;"></div>
<svg style="position:absolute;left:339px;top:250px" width="10" height="5" viewBox="0 0 10 5"><path d="M0 0 L10 0 L5 5 Z" fill="#222"/></svg>
<svg style="position:absolute;left:318px;top:243px" width="17" height="17" viewBox="0 0 17 17"><defs><radialGradient id="g318_243" cx="0.4" cy="0.35" r="0.7"><stop offset="0" stop-color="#ffffff"/><stop offset="0.55" stop-color="#c8e6fc"/><stop offset="1" stop-color="#86bff0"/></radialGradient></defs><path d="M9.8 9.8 L14.2 14.2" stroke="#5a5a7a" stroke-width="3.6" stroke-linecap="round"/><path d="M9.8 9.8 L14.2 14.2" stroke="#f2a040" stroke-width="2.2" stroke-linecap="round"/><circle cx="6.3" cy="6.3" r="5" fill="url(#g318_243)" stroke="#7a7f9a" stroke-width="1.2"/></svg>
<div class="t" style="left:17px;top:268px;font-size:12.67px;line-height:20px;color:#222;font-weight:400;">Sales Person</div>
<div style="left:99px;top:268px;width:255px;height:24px;overflow:hidden;border:1px solid #7d93aa;background:#eeeeee;"></div>
<div style="left:334px;top:269px;width:19px;height:22px;background:linear-gradient(#fafcfe,#c4d7ea);border-left:1px solid #7d93aa;"></div>
<svg style="position:absolute;left:339px;top:278px" width="10" height="5" viewBox="0 0 10 5"><path d="M0 0 L10 0 L5 5 Z" fill="#222"/></svg>
<svg style="position:absolute;left:318px;top:271px" width="17" height="17" viewBox="0 0 17 17"><defs><radialGradient id="g318_271" cx="0.4" cy="0.35" r="0.7"><stop offset="0" stop-color="#ffffff"/><stop offset="0.55" stop-color="#c8e6fc"/><stop offset="1" stop-color="#86bff0"/></radialGradient></defs><path d="M9.8 9.8 L14.2 14.2" stroke="#5a5a7a" stroke-width="3.6" stroke-linecap="round"/><path d="M9.8 9.8 L14.2 14.2" stroke="#f2a040" stroke-width="2.2" stroke-linecap="round"/><circle cx="6.3" cy="6.3" r="5" fill="url(#g318_271)" stroke="#7a7f9a" stroke-width="1.2"/></svg>
<div class="t" style="left:17px;top:296px;font-size:12.62px;line-height:20px;color:#222;font-weight:400;">Labor Planner</div>
<div style="left:99px;top:296px;width:255px;height:24px;overflow:hidden;border:1px solid #0a0a0a;background:#fff;"></div>
<svg style="position:absolute;left:335px;top:298px" width="17" height="17" viewBox="0 0 17 17"><defs><radialGradient id="g335_298" cx="0.4" cy="0.35" r="0.7"><stop offset="0" stop-color="#ffffff"/><stop offset="0.55" stop-color="#c8e6fc"/><stop offset="1" stop-color="#86bff0"/></radialGradient></defs><path d="M9.8 9.8 L14.2 14.2" stroke="#5a5a7a" stroke-width="3.6" stroke-linecap="round"/><path d="M9.8 9.8 L14.2 14.2" stroke="#f2a040" stroke-width="2.2" stroke-linecap="round"/><circle cx="6.3" cy="6.3" r="5" fill="url(#g335_298)" stroke="#7a7f9a" stroke-width="1.2"/></svg>
<div style="left:366px;top:131px;width:215px;height:98px;border:1px solid #b4b4b4;"></div>
<div style="left:371px;top:125px;width:97px;height:12px;background:#fff;"></div>
<div class="t" style="left:373px;top:122px;font-size:11.74px;line-height:20px;color:#111;font-weight:700;">Charge Duration</div>
<div class="t" style="left:369px;top:141px;font-size:12.1px;line-height:20px;color:#222;font-weight:400;">Start Date/Time</div>
<div style="left:458px;top:141px;width:120px;height:24px;overflow:hidden;border:1px solid #8d8d8d;background:#eeeeee;"><div class="t" style="left:0px;top:2px;font-size:12.16px;line-height:20px;color:#222;font-weight:400">03/02/2018 09:00 AM</div></div>
<div class="t" style="left:369px;top:170px;font-size:12.35px;line-height:20px;color:#222;font-weight:400;">End Date/Time</div>
<div style="left:458px;top:170px;width:120px;height:24px;overflow:hidden;border:1px solid #8d8d8d;background:#eeeeee;"><div class="t" style="left:0px;top:2px;font-size:12.5px;line-height:20px;color:#222;font-weight:400">03/03/2018 09:00 AM</div></div>
<div class="t" style="left:369px;top:199px;font-size:12.64px;line-height:20px;color:#222;font-weight:400;">Duration</div>
<div style="left:458px;top:199px;width:85px;height:24px;overflow:hidden;border:1px solid #8d8d8d;background:#eeeeee;"><div class="t" style="left:0px;top:2px;font-size:13.2px;line-height:20px;color:#222;font-weight:400">1d</div></div>
<div class="t" style="left:588px;top:128px;font-size:12.1px;line-height:20px;color:#222;font-weight:400;">Conv. Date</div>
<div style="left:655px;top:126px;width:89px;height:24px;overflow:hidden;border:1px solid #8d8d8d;background:#eeeeee;"></div>
<div style="left:589px;top:160px;width:12px;height:12px;border:1px solid #6a7888;border-right-color:#8a98a8;border-bottom-color:#8a98a8;background:linear-gradient(135deg,#ffffff 25%,#f0b084 100%);"></div>
<svg style="position:absolute;left:590px;top:161px" width="10" height="10" viewBox="0 0 10 10"><path d="M2.2 5.6 L3.8 8.6 L8.6 2.4" fill="none" stroke="#111" stroke-width="2"/></svg>
<div class="t" style="left:606px;top:157px;font-size:12.51px;line-height:20px;color:#222;font-weight:400;">Show Suggestions</div>
<div style="left:589px;top:180px;width:13px;height:13px;border:1px solid #b4cce4;background:linear-gradient(135deg,#ffffff 15%,#f0a874 100%);"></div>
<div class="t" style="left:606px;top:177px;font-size:12.17px;line-height:20px;color:#a8a8a8;font-weight:400;">Event Pricing</div>
<div style="left:589px;top:200px;width:12px;height:12px;border:1px solid #6a7888;border-right-color:#8a98a8;border-bottom-color:#8a98a8;background:linear-gradient(135deg,#ffffff 25%,#f0b084 100%);"></div>
<svg style="position:absolute;left:590px;top:201px" width="10" height="10" viewBox="0 0 10 10"><path d="M2.2 5.6 L3.8 8.6 L8.6 2.4" fill="none" stroke="#111" stroke-width="2"/></svg>
<div class="t" style="left:606px;top:196px;font-size:12.18px;line-height:20px;color:#222;font-weight:400;">Day-Week-Month Pricing</div>
<div style="left:752px;top:148px;width:290px;height:83px;background:#c8dcf2;border-left:1px solid #6d8ecf;border-top:1px solid #6d8ecf;border-right:1px solid #7a8fa6;border-bottom:1px solid #7a8fa6;"></div>
<div style="left:753px;top:149px;width:288px;height:1px;background:#eaf2fb;"></div>
<div style="left:754px;top:152px;width:284px;height:75px;background:#fff;border:1px solid #acacac;box-shadow:1px 1px 0 #f4f8fc;"></div>
<svg style="position:absolute;left:754px;top:126px" width="91" height="22" viewBox="0 0 91 22"><path d="M0.5 22 L0.5 6.5 L6.5 0.5 L90.5 0.5 L90.5 22" fill="#fff" stroke="#6d8ecf" stroke-width="1"/><path d="M2 22 L2 7 L7 2 L90 2 L90 22 Z" fill="#c84f2f"/></svg>
<div class="t" style="left:760px;top:128px;font-size:11.92px;line-height:20px;color:#fff;font-weight:700;">Comments</div>
<svg style="position:absolute;left:844px;top:126px" width="120" height="22" viewBox="0 0 120 22"><path d="M0.5 22 L0.5 6.5 L6.5 0.5 L119.5 0.5 L119.5 22" fill="#fff" stroke="#7d92aa" stroke-width="1"/><path d="M2 22 L2 7 L7 2 L119 2 L119 22 Z" fill="#fe9b4a"/></svg>
<div class="t" style="left:850px;top:128px;font-size:12.77px;line-height:20px;color:#111;font-weight:400;">LaborComments</div>
<div style="left:756px;top:148px;width:88px;height:1px;background:#eaf2fb;"></div>
<div style="left:761px;top:154px;width:269px;height:69px;overflow:hidden;border:2px solid #74808d;background:#eeeeee;"></div>
<svg style="position:absolute;left:1011px;top:157px" width="17" height="17" viewBox="0 0 17 17"><defs><radialGradient id="g1011_157" cx="0.4" cy="0.35" r="0.7"><stop offset="0" stop-color="#ffffff"/><stop offset="0.55" stop-color="#c8e6fc"/><stop offset="1" stop-color="#86bff0"/></radialGradient></defs><path d="M9.8 9.8 L14.2 14.2" stroke="#5a5a7a" stroke-width="3.6" stroke-linecap="round"/><path d="M9.8 9.8 L14.2 14.2" stroke="#f2a040" stroke-width="2.2" stroke-linecap="round"/><circle cx="6.3" cy="6.3" r="5" fill="url(#g1011_157)" stroke="#7a7f9a" stroke-width="1.2"/></svg>
<div class="t" style="left:362px;top:239px;font-size:12.61px;line-height:20px;color:#222;font-weight:400;">Customer</div>
<div style="left:421px;top:236px;width:160px;height:24px;overflow:hidden;border:1px solid #8d8d8d;background:#eeeeee;"><div class="t" style="left:0px;top:2px;font-size:12.3px;line-height:20px;color:#222;font-weight:400">Intra-Company for Berlin Site</div></div>
<svg style="position:absolute;left:562px;top:238px" width="17" height="17" viewBox="0 0 17 17"><defs><radialGradient id="g562_238" cx="0.4" cy="0.35" r="0.7"><stop offset="0" stop-color="#ffffff"/><stop offset="0.55" stop-color="#c8e6fc"/><stop offset="1" stop-color="#86bff0"/></radialGradient></defs><path d="M9.8 9.8 L14.2 14.2" stroke="#5a5a7a" stroke-width="3.6" stroke-linecap="round"/><path d="M9.8 9.8 L14.2 14.2" stroke="#f2a040" stroke-width="2.2" stroke-linecap="round"/><circle cx="6.3" cy="6.3" r="5" fill="url(#g562_238)" stroke="#7a7f9a" stroke-width="1.2"/></svg>
<div class="t" style="left:362px;top:267px;font-size:12.0px;line-height:20px;color:#222;font-weight:400;">Contact</div>
<div style="left:421px;top:265px;width:160px;height:24px;overflow:hidden;border:1px solid #8d8d8d;background:#eeeeee;"><div class="t" style="left:0px;top:2px;font-size:13.2px;line-height:20px;color:#222;font-weight:400">Tom</div></div>
<svg style="position:absolute;left:562px;top:267px" width="17" height="17" viewBox="0 0 17 17"><defs><radialGradient id="g562_267" cx="0.4" cy="0.35" r="0.7"><stop offset="0" stop-color="#ffffff"/><stop offset="0.55" stop-color="#c8e6fc"/><stop offset="1" stop-color="#86bff0"/></radialGradient></defs><path d="M9.8 9.8 L14.2 14.2" stroke="#5a5a7a" stroke-width="3.6" stroke-linecap="round"/><path d="M9.8 9.8 L14.2 14.2" stroke="#f2a040" stroke-width="2.2" stroke-linecap="round"/><circle cx="6.3" cy="6.3" r="5" fill="url(#g562_267)" stroke="#7a7f9a" stroke-width="1.2"/></svg>
<div class="t" style="left:362px;top:296px;font-size:12.35px;line-height:20px;color:#222;font-weight:400;">Contact Tel #</div>
<div style="left:451px;top:294px;width:129px;height:24px;overflow:hidden;border:1px solid #8d8d8d;background:#eeeeee;"></div>
<div class="t" style="left:587px;top:238px;font-size:13.12px;line-height:20px;color:#222;font-weight:400;">Bill To</div>
<div style="left:654px;top:236px;width:160px;height:24px;overflow:hidden;border:1px solid #8d8d8d;background:#eeeeee;"><div class="t" style="left:0px;top:2px;font-size:12.3px;line-height:20px;color:#222;font-weight:400">Intra-Company for Berlin Site</div></div>
<svg style="position:absolute;left:795px;top:238px" width="17" height="17" viewBox="0 0 17 17"><defs><radialGradient id="g795_238" cx="0.4" cy="0.35" r="0.7"><stop offset="0" stop-color="#ffffff"/><stop offset="0.55" stop-color="#c8e6fc"/><stop offset="1" stop-color="#86bff0"/></radialGradient></defs><path d="M9.8 9.8 L14.2 14.2" stroke="#5a5a7a" stroke-width="3.6" stroke-linecap="round"/><path d="M9.8 9.8 L14.2 14.2" stroke="#f2a040" stroke-width="2.2" stroke-linecap="round"/><circle cx="6.3" cy="6.3" r="5" fill="url(#g795_238)" stroke="#7a7f9a" stroke-width="1.2"/></svg>
<div class="t" style="left:587px;top:267px;font-size:12.36px;line-height:20px;color:#222;font-weight:400;">Bill Contact</div>
<div style="left:654px;top:265px;width:160px;height:24px;overflow:hidden;border:1px solid #8d8d8d;background:#eeeeee;"><div class="t" style="left:0px;top:2px;font-size:13.2px;line-height:20px;color:#222;font-weight:400">Tom</div></div>
<svg style="position:absolute;left:795px;top:267px" width="17" height="17" viewBox="0 0 17 17"><defs><radialGradient id="g795_267" cx="0.4" cy="0.35" r="0.7"><stop offset="0" stop-color="#ffffff"/><stop offset="0.55" stop-color="#c8e6fc"/><stop offset="1" stop-color="#86bff0"/></radialGradient></defs><path d="M9.8 9.8 L14.2 14.2" stroke="#5a5a7a" stroke-width="3.6" stroke-linecap="round"/><path d="M9.8 9.8 L14.2 14.2" stroke="#f2a040" stroke-width="2.2" stroke-linecap="round"/><circle cx="6.3" cy="6.3" r="5" fill="url(#g795_267)" stroke="#7a7f9a" stroke-width="1.2"/></svg>
<div class="t" style="left:587px;top:296px;font-size:12.72px;line-height:20px;color:#222;font-weight:400;">Language</div>
<div style="left:654px;top:294px;width:90px;height:24px;overflow:hidden;border:1px solid #8d8d8d;background:#eeeeee;"></div>
<svg style="position:absolute;left:725px;top:296px" width="17" height="17" viewBox="0 0 17 17"><defs><radialGradient id="g725_296" cx="0.4" cy="0.35" r="0.7"><stop offset="0" stop-color="#ffffff"/><stop offset="0.55" stop-color="#c8e6fc"/><stop offset="1" stop-color="#86bff0"/></radialGradient></defs><path d="M9.8 9.8 L14.2 14.2" stroke="#5a5a7a" stroke-width="3.6" stroke-linecap="round"/><path d="M9.8 9.8 L14.2 14.2" stroke="#f2a040" stroke-width="2.2" stroke-linecap="round"/><circle cx="6.3" cy="6.3" r="5" fill="url(#g725_296)" stroke="#7a7f9a" stroke-width="1.2"/></svg>
<div class="t" style="left:826px;top:245px;font-size:12.5px;line-height:20px;color:#222;font-weight:400;">Document Folder:</div>
<div style="left:826px;top:264px;width:216px;height:49px;overflow:hidden;border:2px solid #74808d;background:#eeeeee;"></div>
<div style="left:1014px;top:240px;width:49px;height:23px;border:1px solid #c4c4c4;background:#fff;"></div>
<div style="left:1024px;top:242px;width:30px;height:20px;border:1px solid #707070;border-radius:2px;background:#fff;"></div>
<div class="t" style="left:1024px;width:30px;text-align:center;top:242px;font-size:11px;line-height:20px;color:#000;font-weight:400;letter-spacing:-0.3px;">Reset</div>
<div style="left:8px;top:356px;width:1172px;height:315px;background:#c8dcf2;border-left:1px solid #6d8ecf;border-top:1px solid #6d8ecf;border-right:1px solid #7a8fa6;border-bottom:1px solid #7a8fa6;"></div>
<div style="left:9px;top:357px;width:1170px;height:1px;background:#eaf2fb;"></div>
<div style="left:10px;top:360px;width:1166px;height:307px;background:#fff;border:1px solid #acacac;box-shadow:1px 1px 0 #f4f8fc;"></div>
<svg style="position:absolute;left:10px;top:334px" width="67" height="22" viewBox="0 0 67 22"><path d="M0.5 22 L0.5 6.5 L6.5 0.5 L66.5 0.5 L66.5 22" fill="#fff" stroke="#6d8ecf" stroke-width="1"/><path d="M2 22 L2 7 L7 2 L66 2 L66 22 Z" fill="#c84f2f"/></svg>
<div class="t" style="left:16px;top:336px;font-size:12.34px;line-height:20px;color:#fff;font-weight:700;">Item(s)</div>
<svg style="position:absolute;left:76px;top:334px" width="59" height="22" viewBox="0 0 59 22"><path d="M0.5 22 L0.5 6.5 L6.5 0.5 L58.5 0.5 L58.5 22" fill="#fff" stroke="#7d92aa" stroke-width="1"/><path d="M2 22 L2 7 L7 2 L58 2 L58 22 Z" fill="#fe9b4a"/></svg>
<div class="t" style="left:82px;top:336px;font-size:12.73px;line-height:20px;color:#111;font-weight:400;">Labor</div>
<div style="left:12px;top:356px;width:64px;height:1px;background:#eaf2fb;"></div>
<div style="left:10px;top:360px;width:1166px;height:34px;border:1px solid #b4b4b4;background:#fff;"></div>
<div class="t" style="left:45px;top:366px;font-size:12.25px;line-height:20px;color:#222;font-weight:400;">Search :</div>
<div class="t" style="left:120px;top:366px;font-size:12.2px;line-height:20px;color:#222;font-weight:400;">Asset</div>
<div style="left:162px;top:365px;width:120px;height:24px;overflow:hidden;border:1px solid #0a0a0a;background:#fff;"></div>
<div class="t" style="left:362px;top:366px;font-size:12.45px;line-height:20px;color:#222;font-weight:400;">Product</div>
<div style="left:412px;top:365px;width:195px;height:24px;overflow:hidden;border:1px solid #0a0a0a;background:#fff;"></div>
<div class="t" style="left:625px;top:366px;font-size:11.8px;line-height:20px;color:#222;font-weight:400;">Qty</div>
<div style="left:647px;top:365px;width:40px;height:24px;overflow:hidden;border:1px solid #0a0a0a;background:#fff;"><div class="t" style="left:0px;top:3px;font-size:12.5px;line-height:20px;color:#222;font-weight:400">1</div></div>
<div style="left:707px;top:371px;width:12px;height:12px;border:1px solid #6a7888;border-right-color:#9aa8b8;border-bottom-color:#9aa8b8;background:linear-gradient(135deg,#ffffff 25%,#f0a878 100%);"></div>
<div class="t" style="left:724px;top:368px;font-size:12.55px;line-height:20px;color:#222;font-weight:400;">Update existing lines</div>
<div style="left:10px;top:395px;width:1166px;height:272px;border:1px solid #b4b4b4;background:#fff;"></div>
<div style="left:12px;top:397px;width:1162px;height:268px;border:1px solid #7a8fa6;background:#fff;"></div>
<div style="left:13px;top:398px;width:1160px;height:20px;background:#fb6c3c;border-top:1px solid #8e3219;"></div>
<div style="left:13px;top:398px;width:14px;height:19px;background:#c84f2f;border:1px solid #8e3219;border-top:0;box-shadow:inset 1px 1px 0 #fb6c3c;"></div>
<div class="t" style="left:13px;top:399px;width:14px;height:18px;overflow:hidden;text-align:center;font-size:12.2px;line-height:20px;color:#fff;">T</div>
<div style="left:28px;top:398px;width:14px;height:19px;background:#c84f2f;border:1px solid #8e3219;border-top:0;box-shadow:inset 1px 1px 0 #fb6c3c;"></div>
<div class="t" style="left:28px;top:399px;width:14px;height:18px;overflow:hidden;text-align:center;font-size:12.2px;line-height:20px;color:#fff;">C</div>
<div style="left:43px;top:398px;width:14px;height:19px;background:#c84f2f;border:1px solid #8e3219;border-top:0;box-shadow:inset 1px 1px 0 #fb6c3c;"></div>
<div class="t" style="left:43px;top:399px;width:14px;height:18px;overflow:hidden;text-align:center;font-size:12.2px;line-height:20px;color:#fff;">X</div>
<div style="left:58px;top:398px;width:14px;height:19px;background:#c84f2f;border:1px solid #8e3219;border-top:0;box-shadow:inset 1px 1px 0 #fb6c3c;"></div>
<div class="t" style="left:58px;top:399px;width:14px;height:18px;overflow:hidden;text-align:center;font-size:12.2px;line-height:20px;color:#fff;">M</div>
<div style="left:73px;top:398px;width:15px;height:19px;background:#c84f2f;border:1px solid #8e3219;border-top:0;box-shadow:inset 1px 1px 0 #fb6c3c;"></div>
<div class="t" style="left:73px;top:399px;width:15px;height:18px;overflow:hidden;text-align:center;font-size:12.2px;line-height:20px;color:#fff;">S</div>
<div style="left:89px;top:398px;width:18px;height:19px;background:#c84f2f;border:1px solid #8e3219;border-top:0;box-shadow:inset 1px 1px 0 #fb6c3c;"></div>
<div class="t" style="left:89px;top:399px;width:18px;height:18px;overflow:hidden;text-align:center;font-size:12.2px;line-height:20px;color:#fff;">I.C</div>
<div style="left:108px;top:398px;width:19px;height:19px;background:#c84f2f;border:1px solid #8e3219;border-top:0;box-shadow:inset 1px 1px 0 #fb6c3c;"></div>
<div class="t" style="left:108px;top:399px;width:19px;height:18px;overflow:hidden;text-align:center;font-size:12.2px;line-height:20px;color:#fff;">I....</div>
<div style="left:128px;top:398px;width:19px;height:19px;background:#c84f2f;border:1px solid #8e3219;border-top:0;box-shadow:inset 1px 1px 0 #fb6c3c;"></div>
<div class="t" style="left:128px;top:399px;width:19px;height:18px;overflow:hidden;text-align:center;font-size:12.2px;line-height:20px;color:#fff;">I.I</div>
<div style="left:148px;top:398px;width:74px;height:19px;background:#c84f2f;border:1px solid #8e3219;border-top:0;box-shadow:inset 1px 1px 0 #fb6c3c;"></div>
<div class="t" style="left:148px;top:399px;width:74px;height:18px;overflow:hidden;text-align:center;font-size:12.15px;line-height:20px;color:#fff;">Status</div>
<div style="left:223px;top:398px;width:19px;height:19px;background:#c84f2f;border:1px solid #8e3219;border-top:0;box-shadow:inset 1px 1px 0 #fb6c3c;"></div>
<div class="t" style="left:223px;top:399px;width:19px;height:18px;overflow:hidden;text-align:center;font-size:12.2px;line-height:20px;color:#fff;">L</div>
<div style="left:243px;top:398px;width:44px;height:19px;background:#c84f2f;border:1px solid #8e3219;border-top:0;box-shadow:inset 1px 1px 0 #fb6c3c;"></div>
<div class="t" style="left:243px;top:399px;width:44px;height:18px;overflow:hidden;text-align:center;font-size:11.93px;line-height:20px;color:#fff;">Action</div>
<div style="left:288px;top:398px;width:99px;height:19px;background:#c84f2f;border:1px solid #8e3219;border-top:0;box-shadow:inset 1px 1px 0 #fb6c3c;"></div>
<div class="t" style="left:288px;top:399px;width:99px;height:18px;overflow:hidden;text-align:center;font-size:12.13px;line-height:20px;color:#fff;">Product ID</div>
<div style="left:388px;top:398px;width:259px;height:19px;background:#c84f2f;border:1px solid #8e3219;border-top:0;box-shadow:inset 1px 1px 0 #fb6c3c;"></div>
<div class="t" style="left:388px;top:399px;width:259px;height:18px;overflow:hidden;text-align:center;font-size:12.76px;line-height:20px;color:#fff;">Description</div>
<div style="left:648px;top:398px;width:54px;height:19px;background:#c84f2f;border:1px solid #8e3219;border-top:0;box-shadow:inset 1px 1px 0 #fb6c3c;"></div>
<div class="t" style="left:648px;top:399px;width:54px;height:18px;overflow:hidden;text-align:center;font-size:12.69px;line-height:20px;color:#fff;">Duration</div>
<div style="left:703px;top:398px;width:29px;height:19px;background:#c84f2f;border:1px solid #8e3219;border-top:0;box-shadow:inset 1px 1px 0 #fb6c3c;"></div>
<div class="t" style="left:703px;top:399px;width:29px;height:18px;overflow:hidden;text-align:center;font-size:12px;line-height:20px;color:#fff;">Qty</div>
<div style="left:733px;top:398px;width:39px;height:19px;background:#c84f2f;border:1px solid #8e3219;border-top:0;box-shadow:inset 1px 1px 0 #fb6c3c;"></div>
<div class="t" style="left:733px;top:399px;width:39px;height:18px;overflow:hidden;text-align:center;font-size:12.97px;line-height:20px;color:#fff;">Unit</div>
<div style="left:773px;top:398px;width:89px;height:19px;background:#c84f2f;border:1px solid #8e3219;border-top:0;box-shadow:inset 1px 1px 0 #fb6c3c;"></div>
<div class="t" style="left:773px;top:399px;width:89px;height:18px;overflow:hidden;text-align:center;font-size:12.16px;line-height:20px;color:#fff;">Day/Each Price</div>
<div style="left:863px;top:398px;width:69px;height:19px;background:#c84f2f;border:1px solid #8e3219;border-top:0;box-shadow:inset 1px 1px 0 #fb6c3c;"></div>
<div class="t" style="left:863px;top:399px;width:69px;height:18px;overflow:hidden;text-align:center;font-size:12.1px;line-height:20px;color:#fff;">Week Price</div>
<div style="left:933px;top:398px;width:69px;height:19px;background:#c84f2f;border:1px solid #8e3219;border-top:0;box-shadow:inset 1px 1px 0 #fb6c3c;"></div>
<div class="t" style="left:933px;top:399px;width:69px;height:18px;overflow:hidden;text-align:center;font-size:12.06px;line-height:20px;color:#fff;">Month Price</div>
<div style="left:1003px;top:398px;width:54px;height:19px;background:#c84f2f;border:1px solid #8e3219;border-top:0;box-shadow:inset 1px 1px 0 #fb6c3c;"></div>
<div class="t" style="left:1003px;top:399px;width:54px;height:18px;overflow:hidden;text-align:center;font-size:12.87px;line-height:20px;color:#fff;">Discount</div>
<div style="left:1058px;top:398px;width:59px;height:19px;background:#c84f2f;border:1px solid #8e3219;border-top:0;box-shadow:inset 1px 1px 0 #fb6c3c;"></div>
<div class="t" style="left:1058px;top:399px;width:59px;height:18px;overflow:hidden;text-align:center;font-size:12.46px;line-height:20px;color:#fff;">Net Each</div>
<div style="left:1118px;top:398px;width:55px;height:19px;background:#c84f2f;border:1px solid #8e3219;border-top:0;box-shadow:inset 1px 1px 0 #fb6c3c;"></div>
<div style="left:1118px;top:399px;width:55px;height:18px;overflow:hidden;"><div class="t" style="left:7px;top:0;font-size:12.3px;line-height:20px;color:#fff;">Net Discount</div></div>
<div style="left:13px;top:647px;width:1160px;height:16px;background:#eeeeee;border-top:1px solid #7a8fa6;border-bottom:1px solid #7a8fa6;box-shadow:inset 0 1px 0 #c4daf0, inset 0 -1px 0 #f8f8f8;"></div>
<div style="left:13px;top:663px;width:1160px;height:1px;background:#c4daf0;"></div>
<svg style="position:absolute;left:18px;top:651px" width="6" height="9" viewBox="0 0 6 9"><path d="M5.5 0 L5.5 9 L0.5 4.5 Z" fill="#222"/></svg>
<div style="left:28px;top:647px;width:542px;height:16px;border:1px solid #ffc000;background:linear-gradient(#e89050 0,#e89050 1px,#f1c6a2 1px,#e9a574 90%,#e8a080);"></div>
<div style="left:297px;top:651px;width:1px;height:9px;background:#8a7a8e;"></div>
<div style="left:298px;top:652px;width:1px;height:9px;background:#f8d8b8;"></div>
<div style="left:299px;top:651px;width:1px;height:9px;background:#8a7a8e;"></div>
<div style="left:300px;top:652px;width:1px;height:9px;background:#f8d8b8;"></div>
<div style="left:301px;top:651px;width:1px;height:9px;background:#8a7a8e;"></div>
<div style="left:302px;top:652px;width:1px;height:9px;background:#f8d8b8;"></div>
<div style="left:1156px;top:648px;width:1px;height:14px;background:#7a8fa6;"></div>
<svg style="position:absolute;left:1162px;top:651px" width="6" height="9" viewBox="0 0 6 9"><path d="M0.5 0 L0.5 9 L5.5 4.5 Z" fill="#222"/></svg>
<div class="t" style="left:71px;top:676px;font-size:14.4px;line-height:20px;color:#222;font-weight:700;">Items</div>
<div style="left:120px;top:673px;width:100px;height:24px;overflow:hidden;border:1px solid #8d8d8d;background:#eeeeee;"></div>
<div class="t" style="left:235px;top:676px;font-size:14.78px;line-height:20px;color:#222;font-weight:700;">Labor</div>
<div style="left:287px;top:673px;width:100px;height:24px;overflow:hidden;border:1px solid #8d8d8d;background:#eeeeee;"></div>
<div class="t" style="left:446px;top:676px;font-size:14.55px;line-height:20px;color:#222;font-weight:700;">Sub Total</div>
<div style="left:525px;top:673px;width:100px;height:24px;overflow:hidden;border:1px solid #8d8d8d;background:#eeeeee;"></div>
<div class="t" style="left:636px;top:676px;font-size:14.19px;line-height:20px;color:#222;font-weight:700;">Tax</div>
<div style="left:670px;top:673px;width:100px;height:24px;overflow:hidden;border:1px solid #8d8d8d;background:#eeeeee;"></div>
<div style="left:813px;top:673px;width:89px;height:23px;border:1px solid #b9b9b9;background:#fff;"></div>
<div class="t" style="left:813px;width:89px;text-align:center;top:676px;font-size:14.22px;line-height:20px;color:#222;font-weight:700;">Total</div>
<div style="left:906px;top:673px;width:100px;height:24px;overflow:hidden;border:1px solid #8d8d8d;background:#eeeeee;"><div class="t" style="left:0px;top:1px;font-size:14.49px;line-height:20px;color:#222;font-weight:700">0.00</div></div>
<div style="left:8px;top:707px;width:1171px;height:24px;border-top:2px solid #9b9b9b;border-bottom:1px solid #c4c4c4;border-right:1px solid #c4c4c4;border-left:1px solid #9b9b9b;background:#fff;"></div>
</body></html>
